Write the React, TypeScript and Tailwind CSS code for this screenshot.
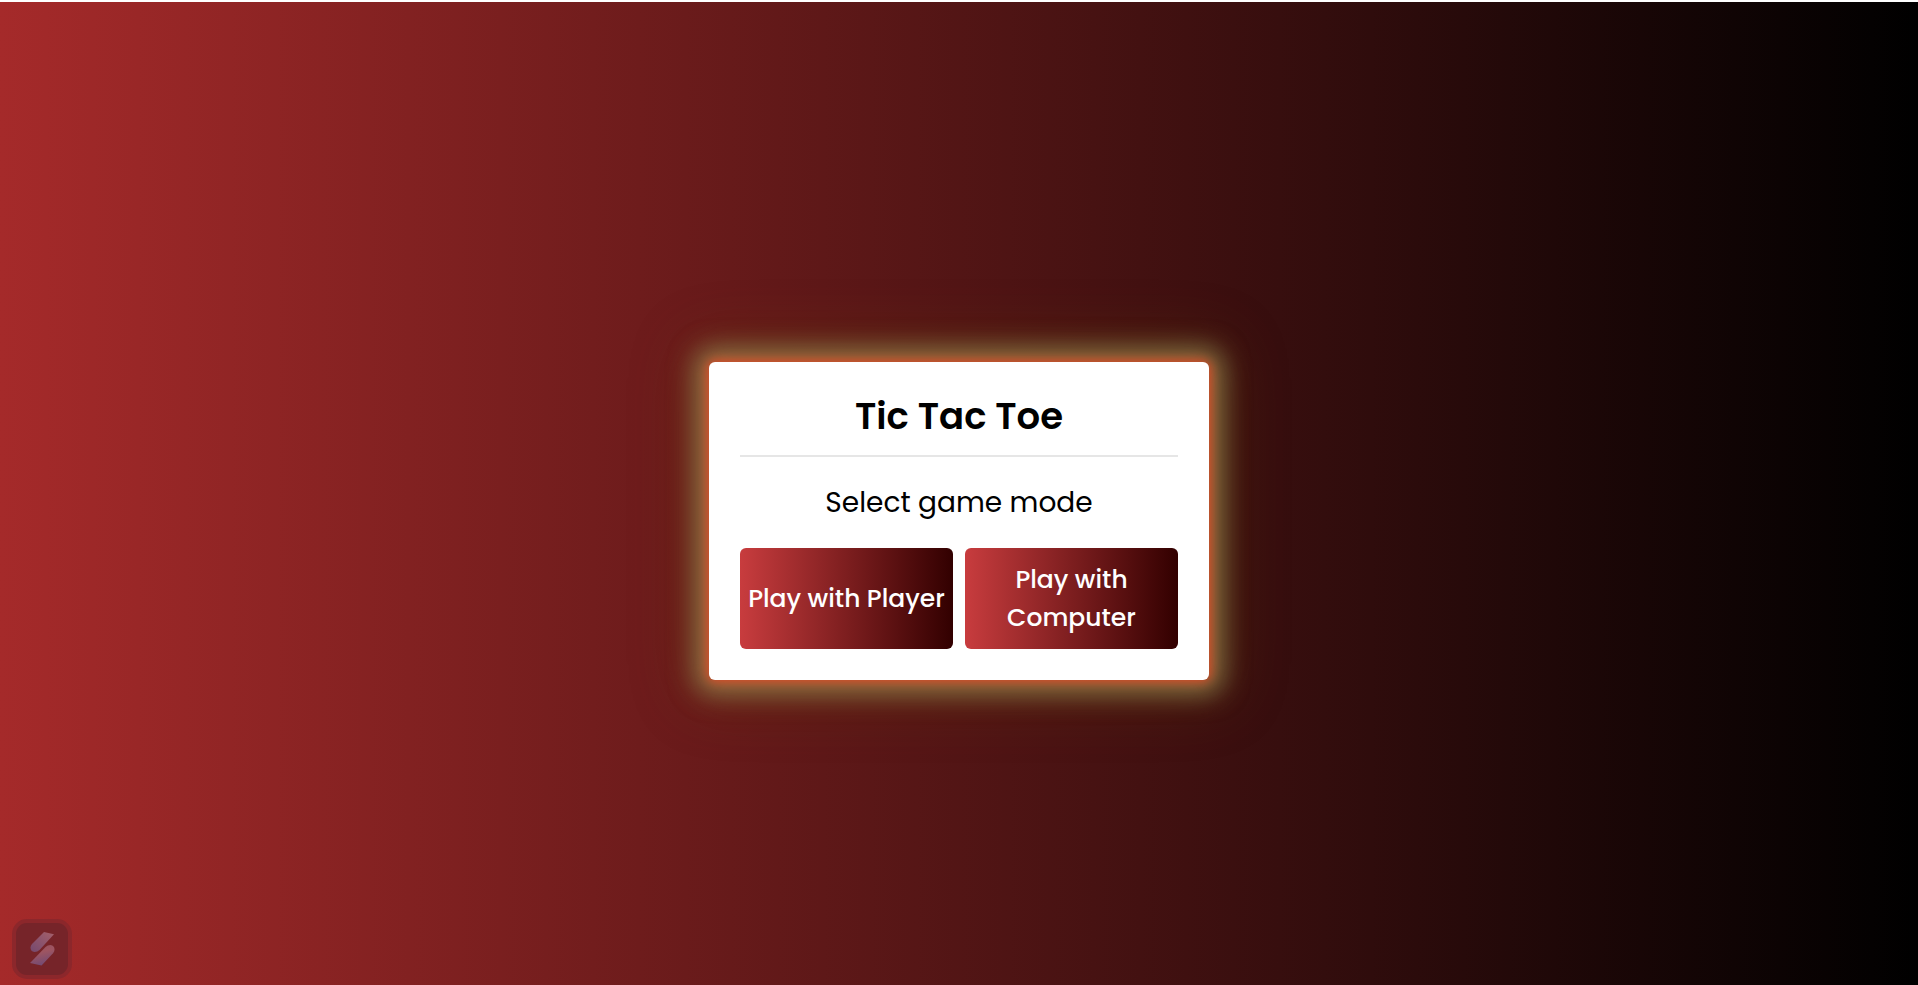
import React from "react";

function Logo() {
  return (
    <svg viewBox="0 0 60 60" className="size-15" aria-hidden="true">
      <defs>
        <linearGradient id="bolt" x1="1" y1="0" x2="0" y2="1">
          <stop offset="0" stopColor="#a5606a" />
          <stop offset="1" stopColor="#75496f" />
        </linearGradient>
        <linearGradient id="boltLow" x1="0.3" y1="0" x2="0.6" y2="1">
          <stop offset="0" stopColor="#95525f" />
          <stop offset="0.35" stopColor="#9f5561" />
          <stop offset="1" stopColor="#704a75" />
        </linearGradient>
      </defs>
      <rect width="60" height="60" rx="15" fill="#8c272b" />
      <rect x="4" y="4" width="52" height="52" rx="11" fill="#762429" />
      <path d="M32 13L42 15.300L27.500 31Q25.500 33 22.500 33Q18.500 32.500 18.500 28.500Q18.500 26.500 20 25Z" fill="url(#bolt)" />
      <path d="M29.500 46.500L18 44L33.500 28Q35.500 26 38.500 26Q42.500 26.500 42.500 30.500Q42.500 32.500 41 34.200Z" fill="url(#boltLow)" />
    </svg>
  );
}

const modes = ["Play with Player", "Play with Computer"];

export default function App() {
  return (
    <main className="relative flex min-h-screen items-center justify-center border-t-2 border-white bg-linear-to-r/srgb from-[#a52a2a] to-black bg-origin-border px-4 pt-[55px] font-['Poppins','Inter',sans-serif] text-black">
      <section className="w-full max-w-[500px] rounded-md bg-white px-[31px] py-[31px] text-center shadow-[0_0_12px_2px_#ff3c1ecc,0_0_26px_14px_#96965abf,0_0_60px_20px_#6e3c0050]">
        <h1 className="border-b-2 border-[#e6e6e6] pb-4 text-[37px] leading-[46px] font-semibold">Tic Tac Toe</h1>
        <p className="py-6 text-[28px] leading-[43px]">Select game mode</p>
        <div className="grid grid-cols-2 gap-3">
          {modes.map((mode) => (
            <button
              key={mode}
              type="button"
              className="min-h-[101px] rounded-md bg-linear-to-r/srgb from-[#c83c3e] to-[#320000] px-1 text-[25px] leading-[38px] font-medium text-white"
            >
              {mode}
            </button>
          ))}
        </div>
      </section>
      <a href="#" aria-label="Home" className="absolute bottom-[6px] left-3">
        <Logo />
      </a>
    </main>
  );
}
